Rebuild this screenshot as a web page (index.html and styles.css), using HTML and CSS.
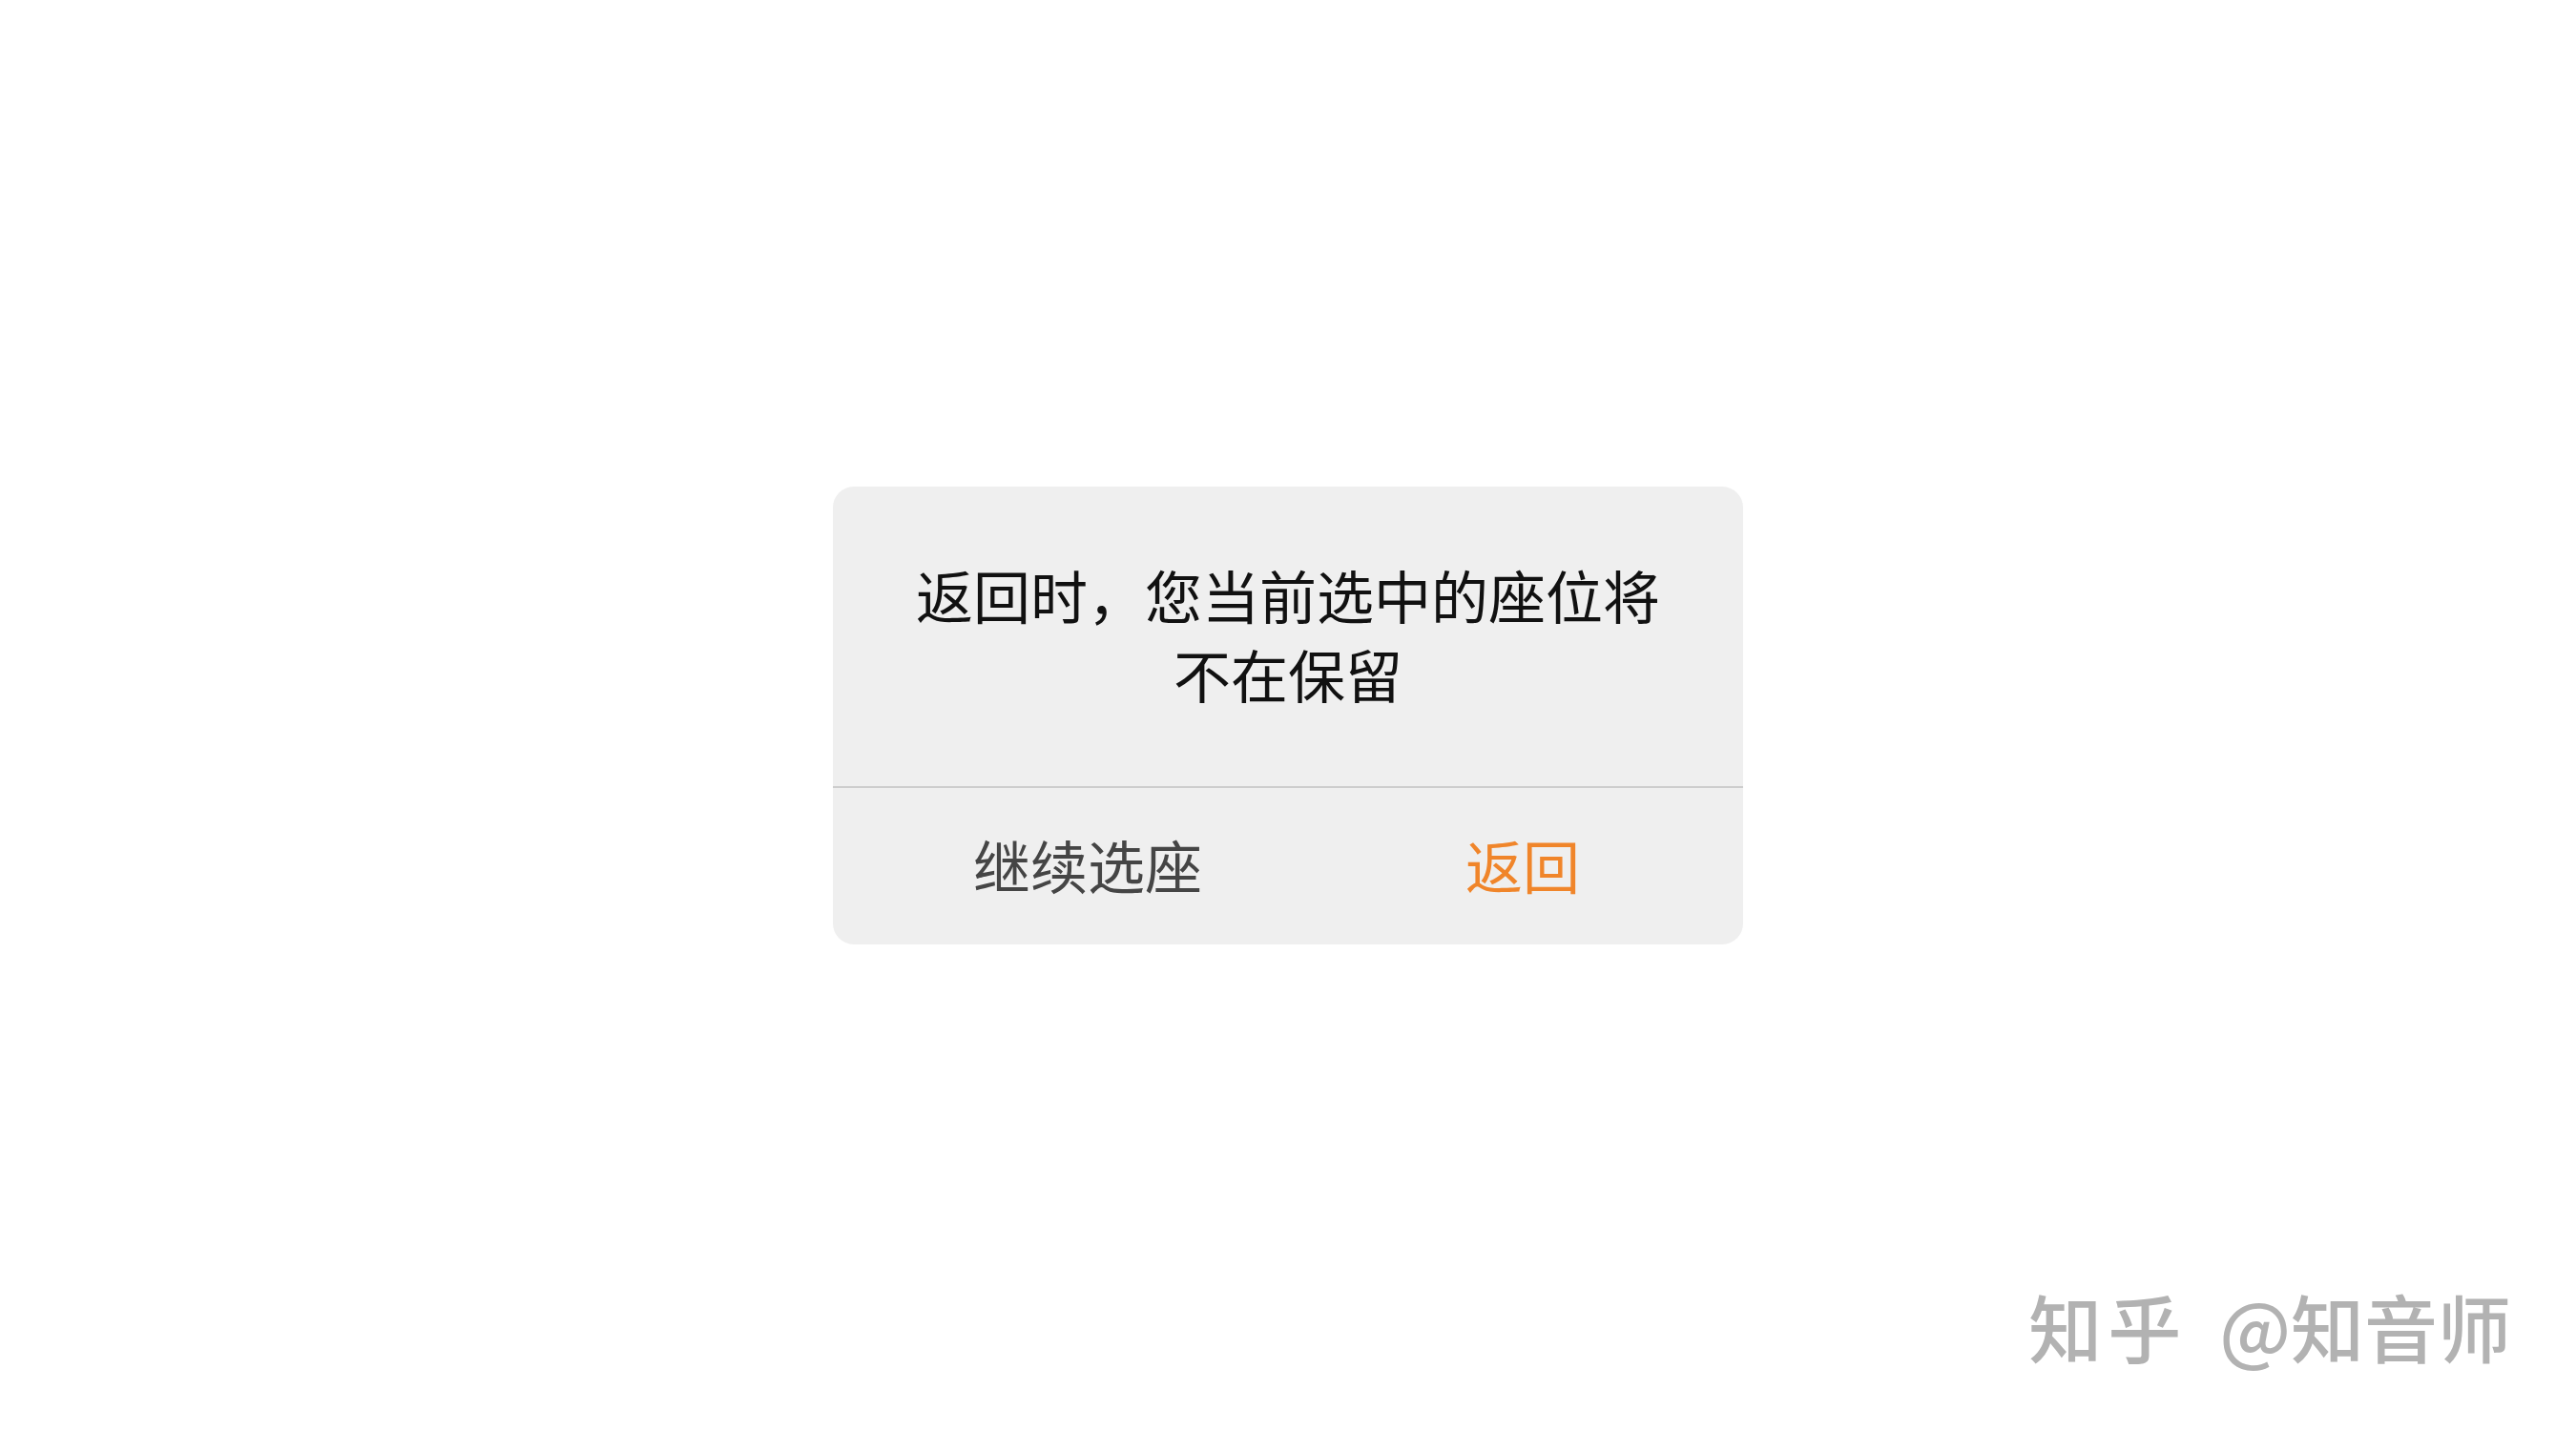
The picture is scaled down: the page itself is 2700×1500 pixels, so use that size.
FILE: index.html
```html
<!DOCTYPE html>
<html lang="zh-CN">
<head>
<meta charset="utf-8">
<title>返回提示</title>
<link rel="stylesheet" href="styles.css">
</head>
<body>
  <main class="screen">
    <section class="alert" role="alertdialog">
      <div class="alert-body">
        <p class="alert-message">返回时，您当前选中的座位将<br>不在保留</p>
      </div>
      <div class="alert-actions">
        <button class="alert-btn alert-btn--cancel" type="button">继续选座</button>
        <button class="alert-btn alert-btn--confirm" type="button">返回</button>
      </div>
    </section>
    <div class="watermark"><span class="watermark-logo">知乎</span><span class="watermark-author">@知音师</span></div>
  </main>
</body>
</html>
```
FILE: styles.css
```css
html, body {
  margin: 0;
  padding: 0;
  background: #ffffff;
}

body {
  font-family: "Noto Sans CJK SC", "Noto Sans", sans-serif;
}

.screen {
  position: relative;
  width: 2700px;
  height: 1500px;
  display: flex;
  align-items: center;
  justify-content: center;
}

.alert {
  width: 954px;
  height: 480px;
  background: #efefef;
  border-radius: 22px;
  display: flex;
  flex-direction: column;
  overflow: hidden;
}

.alert-body {
  height: 316px;
  display: flex;
  align-items: flex-start;
  justify-content: center;
  box-sizing: border-box;
  padding-top: 71px;
  border-bottom: 2px solid #cdcdcd;
}

.alert-message {
  margin: 0;
  font-size: 60px;
  line-height: 83px;
  color: #111111;
  text-align: center;
}

.alert-actions {
  flex: 1;
  display: flex;
  align-items: center;
  justify-content: space-between;
  padding: 0 171px 5px 147px;
}

.alert-btn {
  border: 0;
  background: none;
  padding: 0;
  margin: 0;
  font-family: inherit;
  font-size: 60px;
  line-height: 80px;
  cursor: pointer;
}

.alert-btn--cancel {
  color: #454545;
}

.alert-btn--confirm {
  color: #f0852a;
}

.watermark {
  position: absolute;
  top: 1340px;
  right: 68px;
  display: flex;
  align-items: baseline;
  gap: 34px;
  font-size: 77px;
  line-height: 100px;
  font-weight: 500;
  color: #b2b2b2;
  white-space: nowrap;
}

.watermark-logo {
  letter-spacing: 6px;
}
```
